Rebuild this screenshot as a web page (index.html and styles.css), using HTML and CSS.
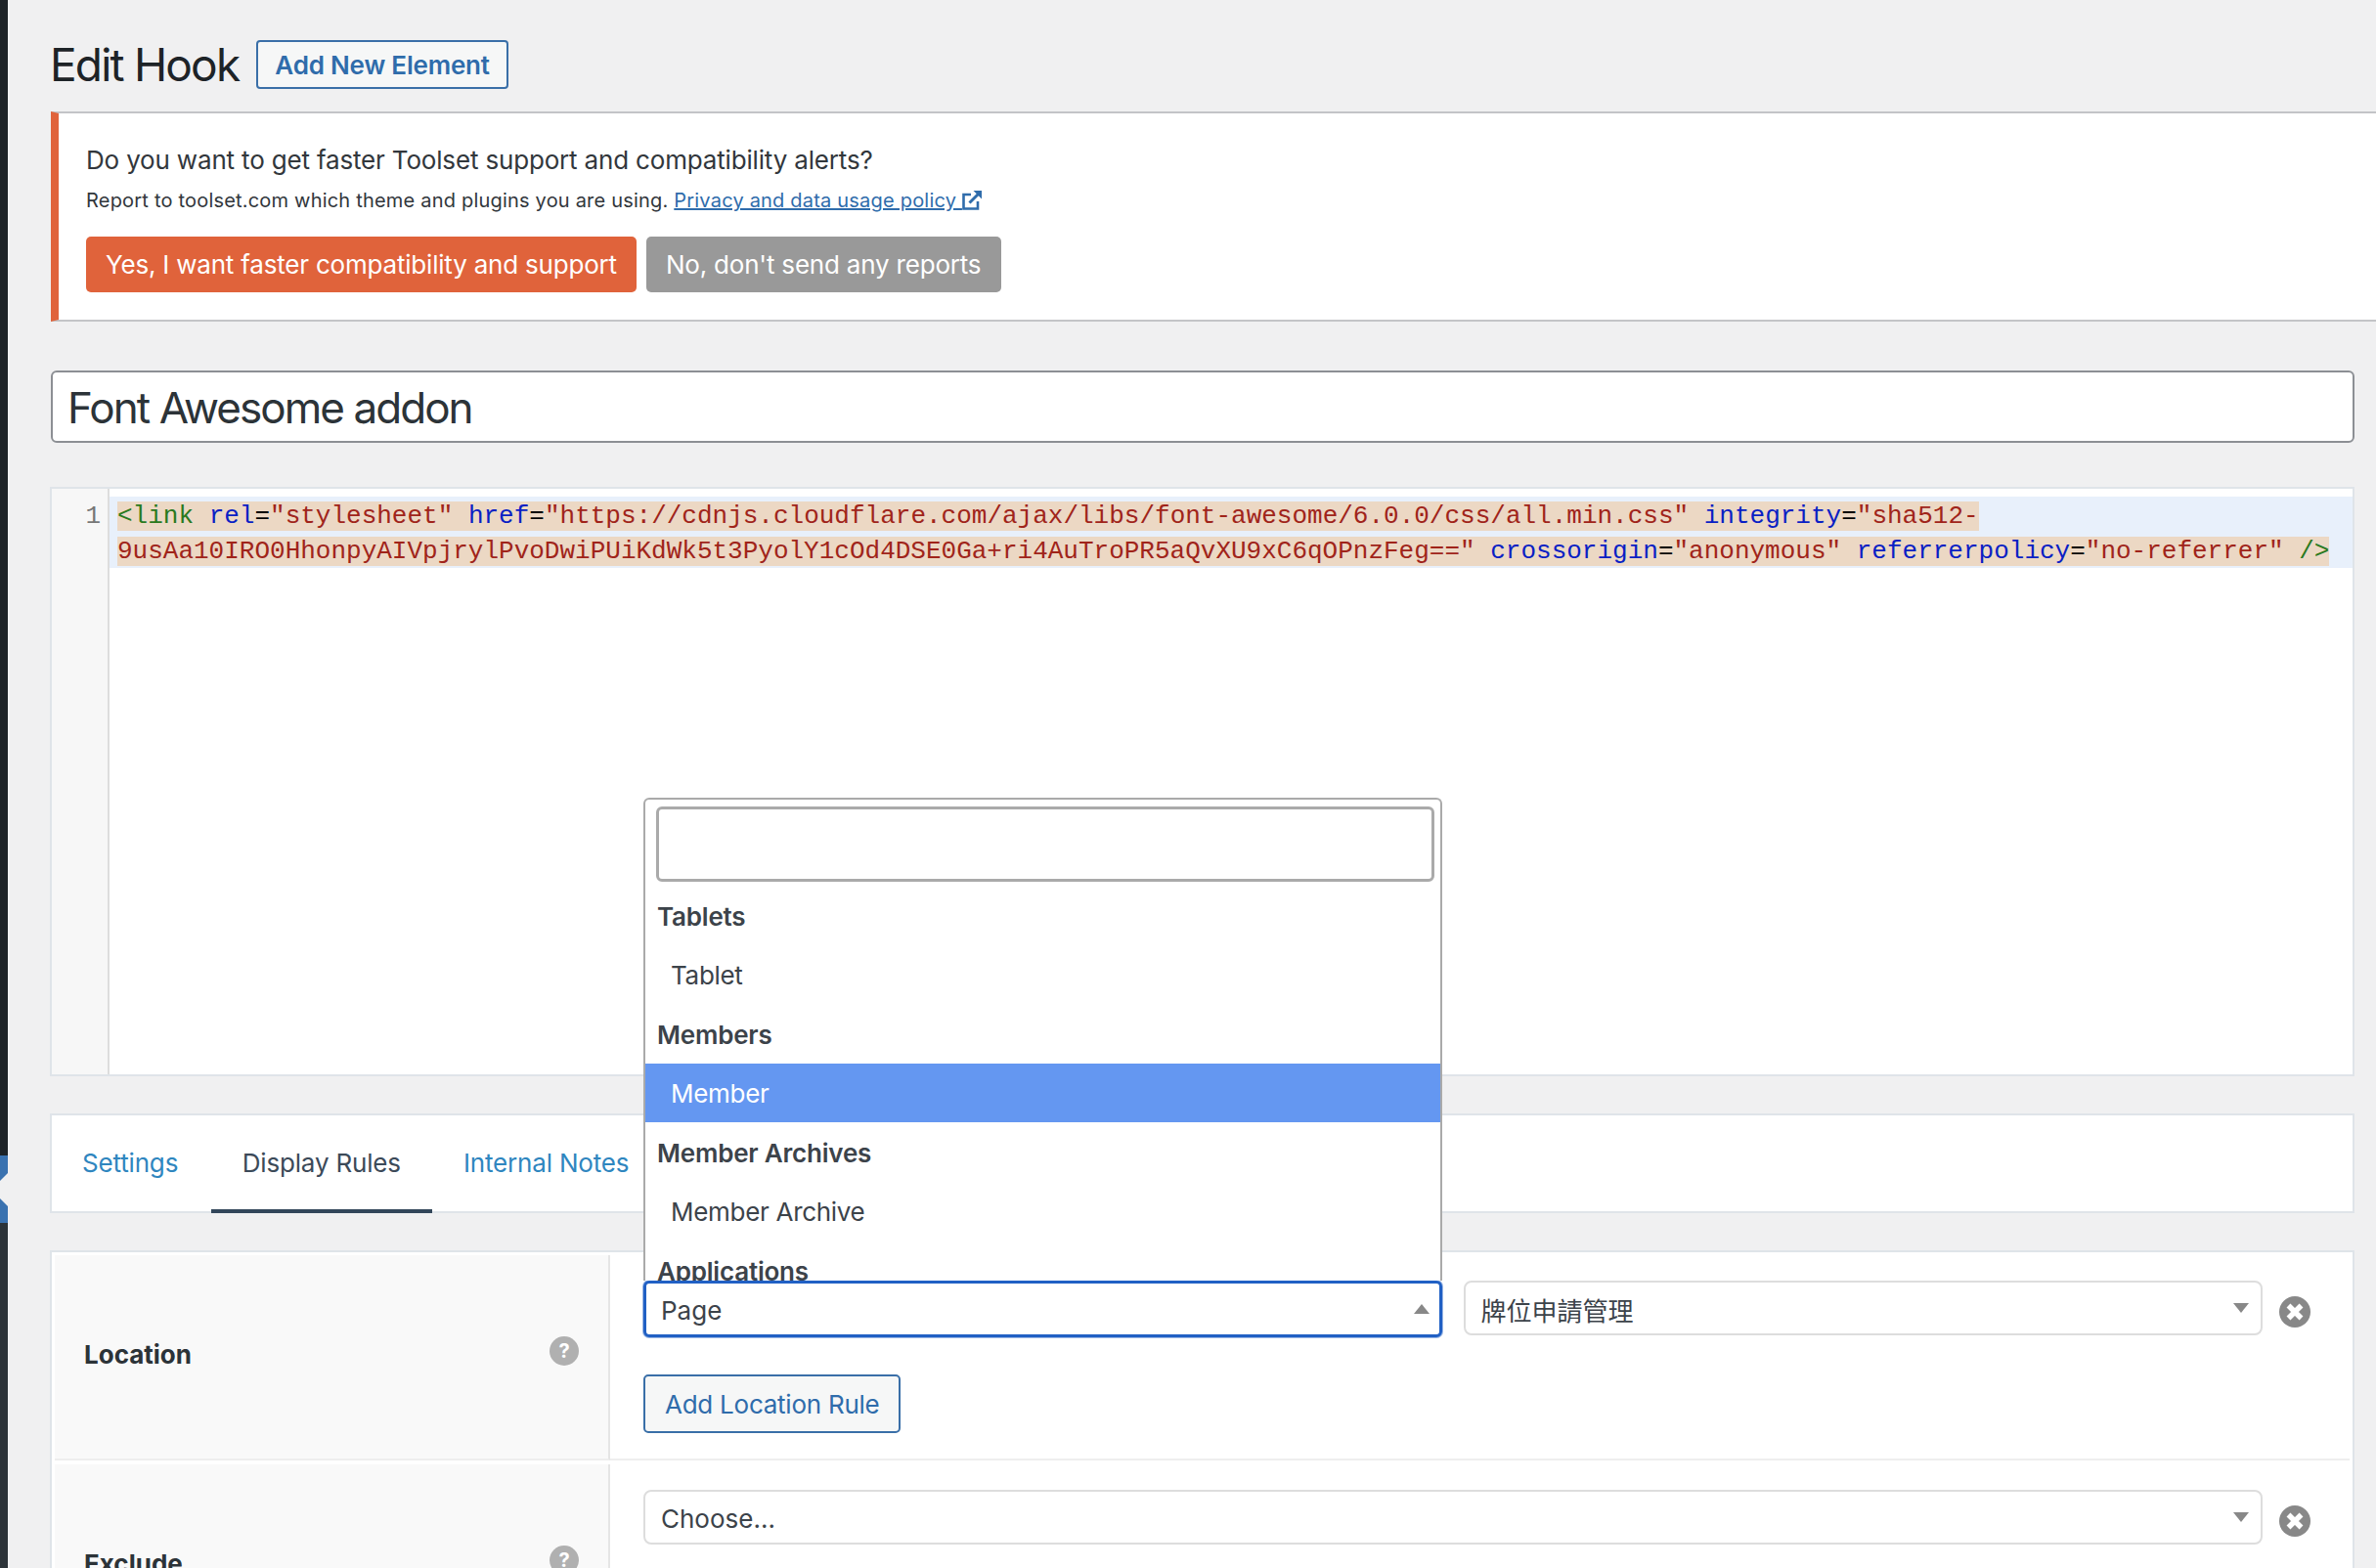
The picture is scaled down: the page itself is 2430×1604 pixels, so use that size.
FILE: index.html
```html
<!DOCTYPE html>
<html lang="en">
<head>
<meta charset="utf-8">
<title>Edit Hook</title>
<link rel="stylesheet" href="styles.css">
</head>
<body>
<div class="page">
  <aside class="rail">
    <div class="rail-top"></div>
    <div class="rail-current">
      <svg class="rail-notch" width="8" height="34" viewBox="0 0 8 34"><path d="M8 0 0 8V26L8 34Z" fill="#f0f0f1"/></svg>
    </div>
    <div class="rail-sub"></div>
  </aside>
  <main class="main">
    <header class="head">
      <h1 class="title">Edit Hook</h1>
      <a class="add-new">Add New Element</a>
    </header>
    <section class="notice">
      <p class="notice-q">Do you want to get faster Toolset support and compatibility alerts?</p>
      <p class="notice-r">Report to toolset.com which theme and plugins you are using. <a class="notice-link">Privacy and data usage policy <svg class="ext" width="20" height="20" viewBox="0 0 20 20"><path d="M9 4H1.500V18.500H16V11" fill="none" stroke="#2f6cab" stroke-width="2.600"/><path d="M7.500 12.500 16.500 3.500" fill="none" stroke="#2f6cab" stroke-width="3"/><path d="M11.500 0H20V8.500Z" fill="#2f6cab"/></svg></a></p>
      <div class="notice-btns">
        <a class="btn btn-orange">Yes, I want faster compatibility and support</a>
        <a class="btn btn-gray">No, don't send any reports</a>
      </div>
    </section>
    <div class="title-input">Font Awesome addon</div>
    <section class="editor">
      <div class="gutter"><span class="lineno">1</span></div>
      <div class="code-area">
        <div class="code-line"><span class="mix"><span class="c-tag">&lt;link</span> <span class="c-attr">rel</span>=<span class="c-str">"stylesheet"</span> <span class="c-attr">href</span>=<span class="c-str">"https://cdnjs.cloudflare.com/ajax/libs/font-awesome/6.0.0/css/all.min.css"</span> <span class="c-attr">integrity</span>=<span class="c-str">"sha512-<br>9usAa10IRO0HhonpyAIVpjrylPvoDwiPUiKdWk5t3PyolY1cOd4DSE0Ga+ri4AuTroPR5aQvXU9xC6qOPnzFeg=="</span> <span class="c-attr">crossorigin</span>=<span class="c-str">"anonymous"</span> <span class="c-attr">referrerpolicy</span>=<span class="c-str">"no-referrer"</span> <span class="c-tag">/&gt;</span></span></div>
      </div>
    </section>
    <nav class="tabs">
      <a class="tab tab-first">Settings</a>
      <a class="tab tab-active">Display Rules</a>
      <a class="tab">Internal Notes</a>
    </nav>
    <section class="rules">
      <div class="rule">
        <div class="rule-label"><span class="rule-name">Location</span><span class="help">?</span></div>
        <div class="rule-body">
          <div class="rule-selects">
            <div class="select select-open">
              <div class="dropdown">
                <div class="dd-search"></div>
                <div class="dd-group">Tablets</div>
                <div class="dd-item">Tablet</div>
                <div class="dd-group">Members</div>
                <div class="dd-item dd-selected">Member</div>
                <div class="dd-group">Member Archives</div>
                <div class="dd-item">Member Archive</div>
                <div class="dd-group">Applications</div>
              </div>
              <span class="select-text">Page</span>
              <svg class="caret" width="16" height="10" viewBox="0 0 16 10"><path d="M8 0 16 10H0Z" fill="#888"/></svg>
            </div>
            <div class="select">
              <span class="select-text">牌位申請管理</span>
              <svg class="caret" width="16" height="10" viewBox="0 0 16 10"><path d="M0 0H16L8 10Z" fill="#888"/></svg>
            </div>
            <svg class="remove" width="32" height="32" viewBox="0 0 32 32"><circle cx="16" cy="16" r="16" fill="#888"/><path d="M9.500 9.500 22.500 22.500M22.500 9.500 9.500 22.500" stroke="#fff" stroke-width="5.500"/></svg>
          </div>
          <a class="add-rule">Add Location Rule</a>
        </div>
      </div>
      <div class="rule">
        <div class="rule-label"><span class="rule-name">Exclude</span><span class="help">?</span></div>
        <div class="rule-body">
          <div class="rule-selects">
            <div class="select">
              <span class="select-text">Choose...</span>
              <svg class="caret" width="16" height="10" viewBox="0 0 16 10"><path d="M0 0H16L8 10Z" fill="#888"/></svg>
            </div>
            <svg class="remove" width="32" height="32" viewBox="0 0 32 32"><circle cx="16" cy="16" r="16" fill="#888"/><path d="M9.500 9.500 22.500 22.500M22.500 9.500 9.500 22.500" stroke="#fff" stroke-width="5.500"/></svg>
          </div>
        </div>
      </div>
    </section>
  </main>
</div>
</body>
</html>
```
FILE: styles.css
```css
* { box-sizing: border-box; }
html, body { margin: 0; height: 1604px; overflow: hidden; }
body { background: #f0f0f1; color: #2c3338; font-family: Inter, "Noto Sans CJK TC", sans-serif; font-size: 26px; }
.page { display: flex; height: 1604px; overflow: hidden; }

.rail { flex: 0 0 8px; display: flex; flex-direction: column; }
.rail-top { height: 1182px; background: #1d2327; }
.rail-current { height: 69px; background: #3a72b0; display: flex; align-items: center; }
.rail-sub { flex: 1; background: #2c3338; }

.main { flex: 1; min-width: 0; padding: 41px 22px 0 44px; }

.head { display: flex; align-items: center; gap: 18px; height: 50px; }
.title { margin: 0 0 0 -1px; font-size: 46px; font-weight: 400; color: #1d2327; letter-spacing: -1.800px; line-height: 50px; }
.add-new { height: 50px; padding: 0 17px; display: flex; align-items: center; border: 2px solid #3a6fa8; border-radius: 4px; background: #f6f7f7; color: #2f6cab; font-size: 26px; font-weight: 600; letter-spacing: -.2px; }

.notice { margin: 23px -22px 0 0; height: 215px; padding: 28px 0 0 28px; background: #fff; border: solid #c3c4c7; border-width: 2px 0; border-left: 8px solid #e0633b; }
.notice-q { margin: 0; font-size: 26px; line-height: 40px; letter-spacing: -.17px; color: #32373c; }
.notice-r { margin: 6px 0 0; font-size: 20px; line-height: 30px; letter-spacing: .2px; color: #32373c; }
.notice-link { color: #2f6cab; text-decoration: underline; }
.ext { vertical-align: -3px; }
.notice-btns { display: flex; gap: 10px; margin-top: 22px; }
.btn { height: 57px; padding: 0 20px; display: flex; align-items: center; border-radius: 5px; color: #fff; font-size: 26px; letter-spacing: -.2px; }
.btn-orange { background: #e0633b; }
.btn-gray { background: #999; padding-right: 21px; }

.title-input { margin: 50px 0 0; height: 74px; padding: 2px 16px 0 15px; display: flex; align-items: center; background: #fff; border: 2px solid #8c8f94; border-radius: 6px; font-size: 44px; letter-spacing: -1.950px; color: #2c3338; }

.editor { margin: 45px 0 0 -1px; height: 603px; display: flex; background: #fff; border: 2px solid #dfe4e9; }
.gutter { flex: 0 0 59px; padding: 10px 7px 0 0; background: #f7f7f7; border-right: 2px solid #ddd; text-align: right; font: 26px/36px "Liberation Mono", monospace; color: #777; }
.code-area { flex: 1; min-width: 0; padding-top: 8px; }
.code-line { height: 73px; padding: 2px 0 0 8px; background: #e8f0fb; font: 26px/36px "Liberation Mono", monospace; white-space: nowrap; color: #000; }
.mix { background: #ecd8c4; }
.c-tag { color: #2a7a1e; }
.c-attr { color: #0a1fc4; }
.c-str { color: #a0241a; }

.tabs { margin: 38px 0 0 -1px; height: 102px; display: flex; background: #fff; border: 2px solid #dfe4e9; }
.tab { padding: 0 32px; height: 100px; display: flex; align-items: center; color: #2f86bf; font-size: 26px; letter-spacing: -.17px; padding-top: 1px; border-bottom: 4px solid transparent; }
.tab-first { padding-left: 31px; padding-right: 33.500px; }
.tab-active { color: #3c4a59; border-bottom-color: #32465a; }

.rules { margin: 38px 0 0 -1px; padding: 3px; background: #fff; border: 2px solid #dfe4e9; height: 400px; }
.rule { display: grid; grid-template-columns: 568px 1fr; height: 210px; margin-bottom: 4px; }
.rule-label { display: flex; align-items: center; justify-content: space-between; padding: 0 30px 12px 30px; background: #f9f9f9; border-right: 2px solid #e5e5e5; border-bottom: 2px solid #eee; }
.rule-name { font-size: 26px; font-weight: 700; color: #2c3338; padding-top: 6px; }
.help { width: 30px; height: 30px; border-radius: 50%; background: #b0b0b0; color: #fff; font-size: 20px; font-weight: 700; display: flex; align-items: center; justify-content: center; }
.rule-body { padding: 26px 40px 0 34px; border-bottom: 2px solid #eee; }
.rule-selects { display: flex; align-items: flex-start; gap: 22px; }
.select { position: relative; flex: 1; height: 56px; padding: 0 12px 0 16px; display: flex; align-items: center; justify-content: space-between; background: #fff; border: 2px solid #ddd; border-radius: 8px; color: #3c434a; }
.select-text { padding-top: 3px; }
.select-open { height: 58px; padding: 0 10px 0 15px; border: 3px solid #2160c4; border-radius: 6px; box-shadow: 0 0 0 1px rgba(33, 96, 196, .45); }
.caret { flex: none; }
.remove { flex: none; margin: 16px 0 0 -5px; }
.add-rule { display: inline-flex; align-items: center; height: 60px; margin-top: 38px; padding: 0 20px; border: 2px solid #3a6fa8; border-radius: 5px; background: #f6f7f7; color: #2f6cab; font-size: 26px; letter-spacing: -.25px; }

.dropdown { position: absolute; left: -3px; right: -3px; bottom: 100%; margin-bottom: 3px; height: 494px; overflow: hidden; background: #fff; border: 2px solid #aaa; border-bottom: 0; border-radius: 6px 6px 0 0; padding-top: 7px; }
.dd-search { height: 77px; margin: 0 6px 0 11px; border: 3px solid #aaa; border-radius: 6px; background: #fff; }
.dd-group, .dd-item { height: 60.500px; padding-top: 2px; display: flex; align-items: center; }
.dd-group { padding-left: 12px; font-weight: 600; color: #3c434a; letter-spacing: -.2px; }
.dd-item { padding-left: 26px; color: #3c434a; letter-spacing: -.3px; }
.dd-search + .dd-group { margin-top: 4px; }
.dd-selected { background: #6497f1; color: #fff; }
```
